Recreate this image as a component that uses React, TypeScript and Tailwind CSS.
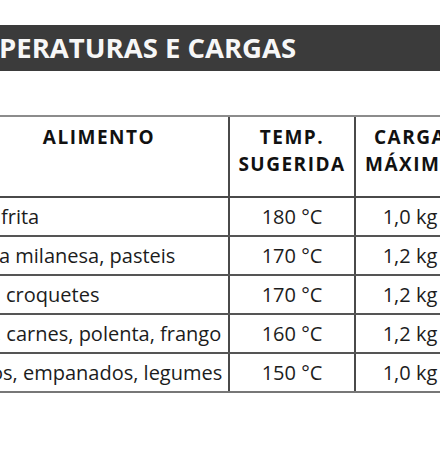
import React from "react";

// Linhas visíveis da tabela (recortada à esquerda e à direita)
const rows = [
  { food: "frita", offset: "ml-[1px]", temp: "180 °C", load: "1,0 kg" },
  { food: "a milanesa, pasteis", offset: "ml-[-1px]", temp: "170 °C", load: "1,2 kg" },
  { food: "croquetes", offset: "ml-[6px]", temp: "170 °C", load: "1,2 kg" },
  { food: ", carnes, polenta, frango", offset: "ml-[-4px]", temp: "160 °C", load: "1,2 kg" },
  { food: "os, empanados, legumes", offset: "ml-[-9px]", temp: "150 °C", load: "1,0 kg" },
];

export default function App() {
  return (
    <div
      className="w-[440px] h-[454px] overflow-hidden bg-white"
      style={{ fontFamily: '"Open Sans", "Noto Sans", sans-serif' }}
    >
      {/* Faixa do título */}
      <div className="mt-[25px] h-[46px] bg-[#3b3b3b] flex items-center">
        <h1 className="text-[27.5px] font-bold text-[#f7f7f7] leading-none whitespace-nowrap ml-[-1px]">
          PERATURAS E CARGAS
        </h1>
      </div>

      {/* Tabela */}
      <div className="mt-[44px] ml-[-30px] w-[494px] border-t-2 border-[#8c8c8c]">
        {/* Cabeçalho */}
        <div className="flex h-[81px] border-b-2 border-[#4a4a4a] text-[19px] font-bold tracking-[1.5px] leading-[27px] text-[#111]">
          <div className="w-[258px] pt-[7px] text-center">ALIMENTO</div>
          <div className="w-[126px] pt-[7px] text-center border-l-2 border-[#4a4a4a]">
            TEMP.
            <br />
            SUGERIDA
          </div>
          <div className="w-[110px] pt-[7px] text-center border-l-2 border-[#4a4a4a] whitespace-nowrap">
            CARGA
            <br />
            MÁXIMA
          </div>
        </div>

        {rows.map((r, i) => (
          <div
            key={i}
            className={`flex h-[39px] text-[20px] text-[#1c1c1c] border-b-2 ${
              i === rows.length - 1 ? "border-[#777]" : "border-[#555]"
            }`}
          >
            <div className="w-[258px] pl-[30px] overflow-hidden flex items-center whitespace-nowrap">
              <span className={r.offset}>{r.food}</span>
            </div>
            <div className="w-[126px] flex items-center justify-center border-l-2 border-[#4a4a4a]">
              {r.temp}
            </div>
            <div className="w-[110px] flex items-center justify-center border-l-2 border-[#4a4a4a]">
              {r.load}
            </div>
          </div>
        ))}
      </div>
    </div>
  );
}
